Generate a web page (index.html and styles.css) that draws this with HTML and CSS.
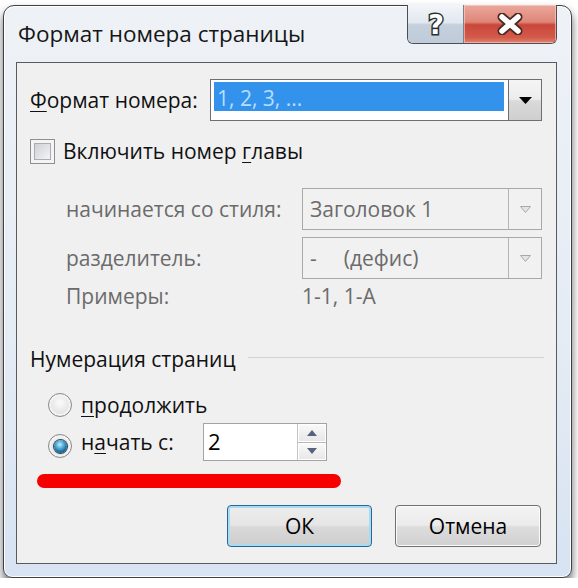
FILE: index.html
```html
<!DOCTYPE html>
<html lang="ru">
<head>
<meta charset="utf-8">
<title>Формат номера страницы</title>
<link rel="stylesheet" href="styles.css">
</head>
<body>
<div class="window">
  <div class="titlebar">
    <div class="title">Формат номера страницы</div>
    <div class="caption-btns">
      <div class="cbtn help">
        <svg width="22" height="30" viewBox="0 0 22 30"><text x="11" y="25" text-anchor="middle" font-family="DejaVu Sans, sans-serif" font-weight="bold" font-size="27" fill="#ffffff" stroke="#2e2e2e" stroke-width="3" paint-order="stroke">?</text></svg>
      </div>
      <div class="cbtn close">
        <svg width="26" height="22" viewBox="0 0 26 22"><path d="M5 4L21 18M21 4L5 18" stroke="#4a2a24" stroke-width="9" stroke-linecap="round"/><path d="M5 4L21 18M21 4L5 18" stroke="#ffffff" stroke-width="5.5" stroke-linecap="round"/></svg>
      </div>
    </div>
  </div>
  <div class="client">
    <div class="row r-format">
      <div class="lbl w-format"><u>Ф</u>ормат номера:</div>
      <div class="combo active">
        <div class="combo-field"><span class="sel">1, 2, 3, ...</span></div>
        <div class="combo-btn"><svg width="13" height="7" viewBox="0 0 13 7"><path d="M0 0H13L6.5 7Z" fill="#000"/></svg></div>
      </div>
    </div>
    <div class="row r-check">
      <span class="checkbox"><span class="check-inner"></span></span>
      <span class="lbl check-lbl">Включить номер <u>г</u>лавы</span>
    </div>
    <div class="row r-sub r-style">
      <div class="lbl dis w-sub">начинается со стиля:</div>
      <div class="combo disabled">
        <div class="combo-field dis-field">Заголовок 1</div>
        <div class="combo-btn dis-btn"><svg width="11" height="7" viewBox="0 0 11 7"><path d="M0.5 0.5H10.5L5.5 6.5Z" fill="#e4e4e4" stroke="#a8a8a8"/></svg></div>
      </div>
    </div>
    <div class="row r-sub r-sep">
      <div class="lbl dis w-sub">разделитель:</div>
      <div class="combo disabled">
        <div class="combo-field dis-field"><span>-</span><span class="sep-name">(дефис)</span></div>
        <div class="combo-btn dis-btn"><svg width="11" height="7" viewBox="0 0 11 7"><path d="M0.5 0.5H10.5L5.5 6.5Z" fill="#e4e4e4" stroke="#a8a8a8"/></svg></div>
      </div>
    </div>
    <div class="row r-sub r-ex">
      <div class="lbl dis w-sub">Примеры:</div>
      <div class="lbl dis">1-1, 1-А</div>
    </div>
    <div class="row r-group">
      <span class="lbl">Нумерация страниц</span>
      <span class="gline"></span>
    </div>
    <div class="row r-radio r-radio1">
      <span class="radio"></span>
      <span class="lbl radio-lbl"><u>п</u>родолжить</span>
    </div>
    <div class="row r-radio r-radio2">
      <span class="radio checked"><span class="dot"></span></span>
      <span class="lbl radio-lbl w-start">н<u>а</u>чать с:</span>
      <div class="spin">
        <div class="spin-val">2</div>
        <div class="spin-btns">
          <div class="spin-b"><svg width="10" height="6" viewBox="0 0 10 6"><path d="M0 6L5 0L10 6Z" fill="#55637c"/></svg></div>
          <div class="spin-b"><svg width="10" height="6" viewBox="0 0 10 6"><path d="M0 0L5 6L10 0Z" fill="#55637c"/></svg></div>
        </div>
      </div>
    </div>
    <div class="redline"></div>
    <div class="row r-buttons">
      <div class="btn ok">ОК</div>
      <div class="btn cancel">Отмена</div>
    </div>
  </div>
</div>
</body>
</html>
```
FILE: styles.css
```css
html, body {
  margin: 0;
  background: #ffffff;
}
body {
  font-family: "Open Sans", "Noto Sans", sans-serif;
  font-size: 21px;
  color: #111111;
}
.window {
  box-sizing: border-box;
  width: 569px;
  height: 573px;
  margin: 5px 0 0 3px;
  border: 1px solid #3d4045;
  border-radius: 11px 11px 9px 9px;
  background: linear-gradient(#eef2f7, #e6ecf4 55%, #d7e3f2);
  box-shadow: inset 0 0 0 1px rgba(255,255,255,0.9), 0 6px 10px rgba(0,0,0,0.6);
  padding: 0 14px 13px 12px;
  display: flex;
  flex-direction: column;
}
.titlebar {
  height: 56px;
  display: flex;
  justify-content: space-between;
  align-items: flex-start;
  flex: none;
}
.title {
  font-size: 22.5px;
  line-height: 28px;
  margin: 14px 0 0 2px;
  color: #161616;
}
.caption-btns {
  box-sizing: border-box;
  display: flex;
  height: 39px;
  width: 150px;
  margin-top: -1px;
  border: 1px solid #4b4e53;
  border-top: none;
  border-radius: 0 0 6px 6px;
  overflow: hidden;
}
.cbtn {
  display: flex;
  align-items: center;
  justify-content: center;
}
.help {
  width: 55px;
  border-right: 1px solid #7c8088;
  background: linear-gradient(#f2f5f9 0%, #e2e8ef 46%, #c5d0dd 52%, #bfcbd9 100%);
}
.close {
  flex: 1;
  background: linear-gradient(#eba79d 0%, #de8677 45%, #c9473a 52%, #d25a4a 85%, #e1826c 100%);
  box-shadow: inset 0 0 0 1px rgba(255,220,210,0.55);
}
.client {
  flex: 1;
  box-sizing: border-box;
  border: 1px solid #565b61;
  background: #f0f0f0;
  padding: 0 14px 0 13px;
  display: flex;
  flex-direction: column;
}
.row {
  display: flex;
  align-items: center;
  flex: none;
}
.lbl {
  white-space: nowrap;
  line-height: 26px;
}
.lbl u {
  text-decoration-thickness: 1px;
  text-underline-offset: 3px;
}
.dis {
  color: #6b6b6b;
}
.r-format {
  margin-top: 16px;
  height: 42px;
}
.w-format {
  width: 180px;
}
.combo {
  box-sizing: border-box;
  height: 42px;
  display: flex;
}
.combo.active {
  width: 332px;
  border: 1px solid #6f6f6f;
  background: #ffffff;
}
.combo-field {
  flex: 1;
  box-sizing: border-box;
}
.active .combo-field {
  padding: 2px 4px 9px 3px;
}
.sel {
  display: block;
  box-sizing: border-box;
  height: 29px;
  padding: 3px 0 0 3px;
  line-height: 26px;
  background: #3393ec;
  color: #b6defd;
  white-space: nowrap;
}
.combo-btn {
  width: 32px;
  display: flex;
  align-items: center;
  justify-content: center;
}
.active .combo-btn {
  border-left: 1px solid #6f6f6f;
  background: linear-gradient(#f5f5f5, #ececec 48%, #dadada 52%, #cfcfcf);
}
.combo.disabled {
  width: 240px;
  border: 1px solid #a9a9a9;
  background: #f1f1f1;
  color: #6b6b6b;
}
.dis-field {
  display: flex;
  align-items: center;
  padding-left: 7px;
  line-height: 26px;
  white-space: nowrap;
}
.sep-name {
  margin-left: 27px;
}
.dis-btn {
  border-left: 1px solid #b5b5b5;
}
.r-check {
  margin-top: 9px;
  height: 42px;
}
.checkbox {
  box-sizing: border-box;
  width: 25px;
  height: 25px;
  border: 1px solid #8e8f8f;
  background: #f4f4f4;
  padding: 3px;
  display: flex;
}
.check-inner {
  flex: 1;
  border: 1px solid #a9adb3;
  background: linear-gradient(135deg, #cdd1d6, #f3f4f5);
}
.check-lbl {
  margin-left: 8px;
}
.r-sub {
  padding-left: 36px;
}
.w-sub {
  width: 236px;
}
.r-style {
  margin-top: 16px;
  height: 42px;
}
.r-sep {
  margin-top: 7px;
  height: 42px;
}
.r-ex {
  height: 34px;
}
.r-group {
  margin-top: 31px;
  height: 30px;
}
.gline {
  flex: 1;
  height: 1px;
  background: #d2d2d2;
  margin: 0 -2px 4px 12px;
}
.r-radio {
  padding-left: 18px;
}
.r-radio1 {
  margin-top: 16px;
  height: 30px;
}
.r-radio2 {
  margin-top: 3px;
  height: 38px;
}
.radio {
  box-sizing: border-box;
  width: 24px;
  height: 24px;
  border-radius: 50%;
  border: 1px solid #8a8a8a;
  background: radial-gradient(circle at 50% 40%, #fbfbfb 0%, #e6e6e6 55%, #cfcfcf 100%);
  box-shadow: inset 0 0 0 2px #f3f3f3;
  display: flex;
  align-items: center;
  justify-content: center;
}
.radio.checked {
  margin-top: 8px;
}
.dot {
  width: 13px;
  height: 13px;
  border-radius: 50%;
  background: radial-gradient(circle at 45% 35%, #c5eefc 0%, #5fb6de 30%, #1c6d98 65%, #0b2f4a 100%);
  box-shadow: 0 0 0 1px #2b4a60;
}
.radio-lbl {
  margin-left: 9px;
}
.w-start {
  width: 122px;
}
.spin {
  box-sizing: border-box;
  width: 124px;
  height: 38px;
  border: 1px solid #a3a3a3;
  background: #ffffff;
  display: flex;
}
.spin-val {
  flex: 1;
  padding-left: 4px;
  line-height: 34px;
  font-size: 22px;
  color: #000;
}
.spin-btns {
  width: 28px;
  display: flex;
  flex-direction: column;
  border-left: 1px solid #c4c4c4;
}
.spin-b {
  flex: 1;
  display: flex;
  align-items: center;
  justify-content: center;
  background: linear-gradient(#fafafa, #e6e6e6);
  box-shadow: inset 0 0 0 1px #ffffff;
}
.spin-b + .spin-b {
  border-top: 1px solid #b8b8b8;
}
.redline {
  flex: none;
  height: 14px;
  width: 304px;
  margin: 13px 0 0 7px;
  background: #f60000;
  border-radius: 7px;
  filter: blur(0.6px);
}
.r-buttons {
  margin-top: 17px;
  height: 42px;
  justify-content: flex-end;
  gap: 23px;
  padding-right: 1px;
}
.btn {
  box-sizing: border-box;
  height: 42px;
  border: 1px solid #707070;
  border-radius: 4px;
  background: linear-gradient(#f3f3f3, #ebebeb 48%, #dddddd 52%, #d0d0d0);
  box-shadow: inset 0 0 0 1px #fbfbfb;
  display: flex;
  align-items: center;
  justify-content: center;
  color: #000;
  font-size: 21px;
}
.ok {
  width: 145px;
  border-color: #2f6690;
  box-shadow: inset 0 0 0 2px #a6dcf5;
  background: linear-gradient(#ededed, #e5e5e5 48%, #d9d9d9 52%, #cdcdcd);
}
.cancel {
  width: 146px;
}
```
